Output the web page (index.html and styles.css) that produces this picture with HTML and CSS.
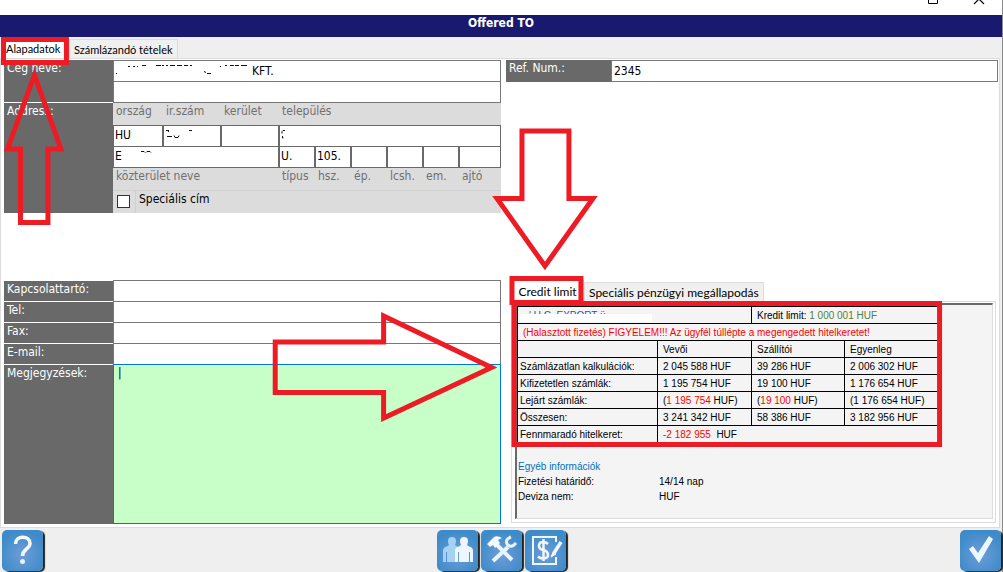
FILE: index.html
```html
<!DOCTYPE html>
<html lang="hu">
<head>
<meta charset="utf-8">
<title>Offered TO</title>
<link rel="stylesheet" href="styles.css">
</head>
<body>
<div class="window">
  <header class="titlebar">
    <svg class="caption-icons" width="60" height="15" viewBox="0 0 60 15" fill="none" stroke="#000">
      <path d="M1.500 -5V3.500H10.500V-5"/><path d="M47 4L52 -1L57 4" stroke-width="1.200"/>
    </svg>
  </header>
  <h1 class="banner">Offered TO</h1>
  <nav class="tabs main-tabs">
    <button class="tab active" type="button">Alapadatok</button>
    <button class="tab" type="button">Számlázandó tételek</button>
  </nav>

  <main class="page">
    <section class="form company">
      <label class="label name-label" for="name1">Cég neve:</label>
      <div class="fields">
        <div class="name-row">
          <input class="input name-input" id="name1" value="KFT.">
          <svg class="marks" width="140" height="20" viewBox="0 0 140 20" fill="none" stroke="#111">
            <path d="M3 13.500h1M15 6.500h2M20 6.500h2M24 6.500h1M29 5.500h4M43 5.500h5M49 5.500h2M53 5.500h2M57 5.500h5M64 5.500h5M71 5.500h4M77 5.500h2M91 11.500l2 1M94 13.500h4M107 6.500h1M112 5.500h2M117 5.500h4M122 5.500h4M128 5.500h6"/>
          </svg>
        </div>
        <input class="input" aria-label="Cég neve 2">
      </div>
      <span class="label">Address:</span>
      <div class="address">
        <div class="grid-a captions"><label for="country">ország</label><label for="zip">ir.szám</label><label for="district">kerület</label><label for="town">település</label></div>
        <div class="grid-a cells">
          <input class="cell" id="country" value="HU">
          <div class="cell-wrap"><input class="cell" id="zip">
            <svg class="marks" width="50" height="20" viewBox="0 0 50 20" fill="none" stroke="#111"><path d="M2 4.500h3M5 5l-1 1M3 10.500h5M10 9.500l1 2h3l1 -2M25 4.500h3"/></svg></div>
          <input class="cell" id="district">
          <div class="cell-wrap"><input class="cell" id="town">
            <svg class="marks" width="20" height="20" viewBox="0 0 20 20" fill="none" stroke="#111"><path d="M5 4.500h-2l-1 1v2M2.500 10v2h1"/></svg></div>
        </div>
        <div class="grid-b cells second">
          <div class="cell-wrap"><input class="cell" id="street" value="E">
            <svg class="marks" width="50" height="20" viewBox="0 0 50 20" fill="none" stroke="#111"><path d="M27 4.500h3l1 1M32 5.500l1 -1h3l1 1"/></svg></div>
          <input class="cell" id="kind" value="U."><input class="cell" id="house" value="105."><input class="cell" id="building"><input class="cell" id="stair"><input class="cell" id="floor"><input class="cell" id="door">
        </div>
        <div class="grid-b captions below"><label for="street">közterület neve</label><label for="kind">típus</label><label for="house">hsz.</label><label for="building">ép.</label><label for="stair">lcsh.</label><label for="floor">em.</label><label for="door">ajtó</label></div>
        <div class="special"><span class="check-box"><input type="checkbox" id="special"></span><label for="special">Speciális cím</label></div>
      </div>
    </section>

    <section class="reference">
      <label class="label" for="ref">Ref. Num.:</label>
      <input class="input" id="ref" value="2345">
    </section>

    <section class="form contact">
      <label class="label" for="person">Kapcsolattartó:</label><input class="input" id="person">
      <label class="label" for="tel">Tel:</label><input class="input" id="tel">
      <label class="label" for="fax">Fax:</label><input class="input" id="fax">
      <label class="label" for="mail">E-mail:</label><input class="input" id="mail">
      <label class="label" for="notes">Megjegyzések:</label><textarea class="notes" id="notes" spellcheck="false">|</textarea>
    </section>

    <section class="credit">
      <nav class="tabs credit-tabs">
        <button class="tab active" type="button">Credit limit</button>
        <button class="tab" type="button">Speciális pénzügyi megállapodás</button>
      </nav>
      <div class="credit-page"><div class="sheet">
        <table class="limits">
          <colgroup><col class="c1"><col class="c2"><col class="c3"><col class="c4"></colgroup>
          <tbody>
          <tr><td colspan="2"><span class="masked">' U C. EXPORT ü</span></td><td colspan="2">Kredit limit: <span class="green">1 000 001 HUF</span></td></tr>
          <tr><td colspan="4" class="warn">(Halasztott fizetés) FIGYELEM!!! Az ügyfél túllépte a megengedett hitelkeretet!</td></tr>
          <tr><td></td><td>Vevői</td><td>Szállítói</td><td>Egyenleg</td></tr>
          <tr><td>Számlázatlan kalkulációk:</td><td>2 045 588 HUF</td><td>39 286 HUF</td><td>2 006 302 HUF</td></tr>
          <tr><td>Kifizetetlen számlák:</td><td>1 195 754 HUF</td><td>19 100 HUF</td><td>1 176 654 HUF</td></tr>
          <tr><td>Lejárt számlák:</td><td>(<span class="red">1 195 754</span> HUF)</td><td>(<span class="red">19 100</span> HUF)</td><td>(1 176 654 HUF)</td></tr>
          <tr><td>Összesen:</td><td>3 241 342 HUF</td><td>58 386 HUF</td><td>3 182 956 HUF</td></tr>
          <tr><td>Fennmaradó hitelkeret:</td><td colspan="3"><span class="red">-2 182 955</span>&nbsp; HUF</td></tr>
          </tbody>
        </table>
        <div class="other">
          <h2>Egyéb információk</h2>
          <dl><dt>Fizetési határidő:</dt><dd>14/14 nap</dd><dt>Deviza nem:</dt><dd>HUF</dd></dl>
        </div>
      </div></div>
    </section>
  </main>

  <footer class="toolbar">
    <button class="tool" type="button" aria-label="Help">
      <svg viewBox="0 0 41 41" fill="none" stroke="#f3f9ff"><path d="M13.500 14C13.500 5 28 5 28 13.500C28 19 20.500 19 20.500 26" stroke-width="3.500"/><circle cx="20.500" cy="31.500" r="2.500" fill="#e6f3ff" stroke="none"/></svg>
    </button>
    <div class="tool-group">
      <button class="tool" type="button" aria-label="Contacts">
        <svg viewBox="0 0 41 41"><path fill="#a6d2f2" d="M6 32V21Q6 17 10 16.500L12 15Q11 13 11 11Q11 7 15 7Q19 7 19 11Q19 13 18 15L21 17V32H10V22H9V32Z"/><path fill="#edf6ff" d="M18 32V21Q18 17 22 16.500L24 15Q23 13 23 11Q23 7 27 7Q31 7 31 11Q31 13 30 15L32 16.500Q36 17 36 21V32H33V22H32V32H22V22H21V32Z"/></svg>
      </button>
      <button class="tool" type="button" aria-label="Tools">
        <svg viewBox="0 0 41 41"><path d="M15 14L31 30M12 31L27 17" stroke="#e8f4ff" stroke-width="4" fill="none"/><path fill="#f4faff" d="M6 14L13 7Q16 5 21 8L17 10L19 13L14 18L12 15L9 17Z"/><path d="M30 7Q24 9 26 14Q30 19 35 13" fill="none" stroke="#e8f4ff" stroke-width="3"/></svg>
      </button>
      <button class="tool" type="button" aria-label="Offer">
        <svg viewBox="0 0 41 41" fill="none" stroke="#f0f8ff"><path d="M31 12V7H8V34H31V27" stroke-width="2"/><path d="M23 14Q21 12 18 12Q14 12 14 16Q14 19 18 20Q23 21 23 25Q23 28.500 18 28.500Q15 28.500 13 26.500M18.500 9V31" stroke-width="2.500"/><path d="M36 12L29 23" stroke-width="3.500"/><path d="M28 22L26 27L31 24" fill="#f0f8ff" stroke-width="1"/></svg>
      </button>
    </div>
    <button class="tool confirm" type="button" aria-label="OK">
      <svg viewBox="0 0 41 41"><path fill="#edf7ff" d="M9 19L13 16L18 23L29 6L33 9L19 33Z"/></svg>
    </button>
  </footer>

  <svg class="annotations" viewBox="0 0 1003 572" preserveAspectRatio="none" fill="none" stroke="#ed1c24" stroke-width="5" aria-hidden="true">
    <rect x="3.500" y="39.500" width="63" height="23"/>
    <path d="M34.500 75L7.500 149H20.500V222.500H48V149H61Z"/>
    <path d="M522.500 131H569.500V198.500H593.500L545.500 266L497.500 198.500H522.500Z"/>
    <path d="M275.500 342H384V316L492 367.500L384 418V392.500H275.500Z"/>
    <rect x="512.500" y="278.500" width="69" height="24"/>
    <rect x="514.500" y="303.500" width="426" height="141"/>
  </svg>
</div>
</body>
</html>
```
FILE: styles.css
```css
* { box-sizing: border-box; }
body { margin: 0; background: #efefef; font: 12px/15px "DejaVu Sans Condensed", Tahoma, sans-serif; color: #000; }
button, input, textarea { font: inherit; color: inherit; margin: 0; border-radius: 0; }
input, textarea { outline: 0; min-width: 0; }

.window { position: relative; display: flex; flex-direction: column; min-height: 100vh; border-right: 1px solid #8c8c8c; }
.titlebar { display: flex; justify-content: flex-end; height: 15px; padding-right: 15px; background: #fff; }
.banner { margin: 0; height: 22px; background: #191970; color: #fff; font-size: 12px; line-height: 16px; font-weight: bold; text-align: center; }

.tabs { display: flex; align-items: flex-end; }
.tab { height: 19px; padding: 0 4px; border: 1px solid #dcdcdc; border-bottom: 0; background: #f0f0f0; font: 12px/19px Lato, sans-serif; white-space: nowrap; }
.tab.active { height: 21px; background: #fff; }
.main-tabs { height: 21px; padding-left: 3px; }
.main-tabs .tab { font-size: 11px; }
.main-tabs .active { width: 66px; padding: 0 2px; text-align: left; }

.page { flex: 1; display: grid; grid-template-columns: 497fr 492fr; grid-template-rows: minmax(220px, auto) 1fr; column-gap: 5px; margin-right: 2px; padding: 1px 1px 3px 3px; background: #fff; border: 1px solid #dcdcdc; }
.form { display: grid; grid-template-columns: 109px 1fr; }
.label { padding: 1px 3px; background: #696969; color: #fff; }
.input { display: block; width: 100%; height: 22px; padding: 0 2px; border: 1px solid #787878; background: #fff; }

.company { align-self: start; }
.company .name-label { border-bottom: 1px solid #fff; }
.name-row + .input { margin-top: -1px; }
.name-row, .cell-wrap { position: relative; }
.name-input { padding-left: 138px; }
.marks { position: absolute; left: 0; top: 0; pointer-events: none; }

.address { background: #dcdcdc; color: #707070; }
.grid-a, .grid-b { display: grid; }
.grid-a { grid-template-columns: 50px 58px 58px 1fr; }
.grid-b { grid-template-columns: 166px repeat(5, 36px) 1fr; }
.captions { height: 22px; }
.captions label { padding: 1px 0 0 3px; }
.cells { color: #000; background: #696969; padding: 1px; column-gap: 2px; }
.cells.grid-a { grid-template-columns: 48px 56px 56px 1fr; }
.cells.grid-b { grid-template-columns: 164px repeat(5, 34px) 1fr; }
.cells.second { padding-top: 0; }
.cell { display: block; width: 100%; height: 20px; padding: 0 1px 2px; border: 0; background: #fff; }
.below { height: 23px; border-bottom: 1px solid #d0d0d0; }
.special { display: flex; height: 22px; color: #000; }
.check-box { width: 23px; padding: 4px 4px 0; border-right: 1px solid #d0d0d0; }
.special input { display: block; appearance: none; width: 13px; height: 13px; border: 1px solid #333; background: #fff; }
.special label { padding: 1px 0 0 3px; }

.reference { display: grid; grid-template-columns: 105px 1fr; align-self: start; }

.contact { grid-template-rows: repeat(4, 21px) 1fr; }
.contact .label { border-top: 1px solid #fff; }
.notes { resize: none; border: 1px solid #0078d7; background: #c8ffc8; padding: 1px 4px; width: 100%; }

.credit { display: flex; flex-direction: column; padding: 0 2px 1px 5px; }
.credit-tabs { height: 21px; }
.credit-tabs .active { width: 73px; }
.credit-page { flex: 1; border: 1px solid #dcdcdc; padding: 1px 2px 3px 3px; }
.sheet { height: 100%; padding-top: 1px; border: 1px solid #dcdcdc; border-top: 2px solid #696969; border-left: 2px solid #696969; background: #f4f4f4; font: 10px/15px "Liberation Sans", Arial, sans-serif; }
.limits { table-layout: fixed; width: 424px; max-width: 100%; border-collapse: collapse; }
.c1 { width: 140px; } .c2 { width: 94px; } .c3 { width: 93px; }
.limits td { height: 17px; padding: 1px 5px 0; border: 1px solid #000; line-height: 15px; white-space: nowrap; }
.limits td:first-child { padding-left: 2px; }
.limits td.warn { padding-left: 5px; color: #f00; }
.red { color: #f00; }
.green { color: #548235; }
.masked { display: block; position: relative; width: 132px; padding-left: 9px; color: #2f5496; }
.masked::after { content: ""; position: absolute; left: 0; top: 6px; width: 132px; height: 8px; background: #fff; }
.other { padding: 16px 0 0 1px; }
.other h2 { margin: 0; font: inherit; color: #0070c0; }
.other dl { display: grid; grid-template-columns: 141px 1fr; margin: 0; }
.other dd { margin: 0; }

.toolbar { display: grid; grid-template-columns: 1fr auto 1fr; align-items: start; height: 44px; padding: 2px 1px 0 2px; }
.tool-group { display: flex; gap: 3px; }
.tool { width: 41px; height: 41px; padding: 0; border: 0; border-radius: 5px; background: radial-gradient(circle at 50% 60%, #6f9dd8, #3d8bc9 75%); box-shadow: 2px 1px 1px #222; }
.tool svg { display: block; width: 41px; height: 41px; }
.confirm { justify-self: end; }

.annotations { position: absolute; inset: 0; width: 100%; height: 100%; pointer-events: none; }
```
